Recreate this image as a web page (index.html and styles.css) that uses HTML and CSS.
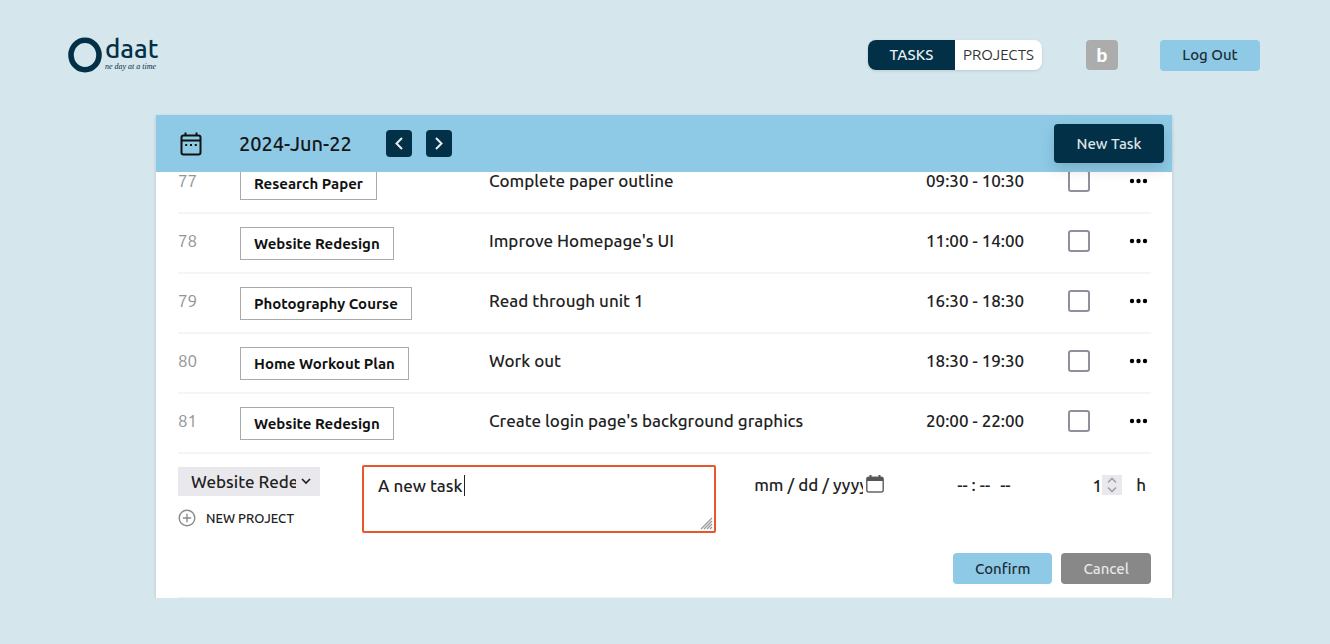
FILE: index.html
```html
<!DOCTYPE html>
<html lang="en">
<head>
<meta charset="utf-8">
<title>Odaat</title>
<link rel="stylesheet" href="styles.css">
</head>
<body>
<header class="topbar">
  <a class="logo" href="#" aria-label="Odaat">
    <svg class="logo-mark" viewBox="0 0 34 36" aria-hidden="true"><ellipse cx="17" cy="18" rx="14" ry="14.7" fill="none" stroke="#023047" stroke-width="5.6"/></svg>
    <span class="logo-words"><span class="logo-name">daat</span><span class="logo-tag">ne day at a time</span></span>
  </a>
  <nav class="topnav">
    <div class="toggle">
      <a class="toggle-item toggle-active" href="#">TASKS</a>
      <a class="toggle-item" href="#">PROJECTS</a>
    </div>
    <a class="avatar" href="#">b</a>
    <button class="btn btn-light logout" type="button">Log Out</button>
  </nav>
</header>

<main class="card">
  <div class="card-head">
    <svg class="calendar" viewBox="0 0 22 24" fill="none" stroke="#111" stroke-width="2" aria-hidden="true">
      <rect x="1.5" y="3.5" width="19" height="19" rx="2"/><path d="M1.500 8.500h19M5.500 .5v3M16.500 .5v3"/><path d="M5.200 13h2M10 13h2M14.800 13h2"/>
    </svg>
    <h1 class="date">2024-Jun-22</h1>
    <div class="steps">
      <button class="step" type="button" aria-label="Previous day"><svg viewBox="0 0 26 27"><path d="M16 8l-5.500 5.500 5.500 5.500"/></svg></button>
      <button class="step" type="button" aria-label="Next day"><svg viewBox="0 0 26 27"><path d="M10 8l5.500 5.500-5.500 5.500"/></svg></button>
    </div>
    <button class="new-task" type="button">New Task</button>
  </div>

  <div class="card-body">
    <table class="tasks">
      <colgroup><col class="c-id"><col class="c-project"><col><col class="c-time"><col class="c-check"><col class="c-more"></colgroup>
      <tbody>
        <tr><td class="id">77</td><td><span class="tag">Research Paper</span></td><td>Complete paper outline</td><td>09:30 - 10:30</td><td><input class="check" type="checkbox" aria-label="Task 77 done"></td><td><button class="more" type="button" aria-label="More"><svg viewBox="0 0 20 6"><circle cx="3" cy="3" r="2.2"/><circle cx="9.5" cy="3" r="2.2"/><circle cx="16" cy="3" r="2.2"/></svg></button></td></tr>
        <tr><td class="id">78</td><td><span class="tag">Website Redesign</span></td><td>Improve Homepage's UI</td><td>11:00 - 14:00</td><td><input class="check" type="checkbox" aria-label="Task 78 done"></td><td><button class="more" type="button" aria-label="More"><svg viewBox="0 0 20 6"><circle cx="3" cy="3" r="2.2"/><circle cx="9.5" cy="3" r="2.2"/><circle cx="16" cy="3" r="2.2"/></svg></button></td></tr>
        <tr><td class="id">79</td><td><span class="tag">Photography Course</span></td><td>Read through unit 1</td><td>16:30 - 18:30</td><td><input class="check" type="checkbox" aria-label="Task 79 done"></td><td><button class="more" type="button" aria-label="More"><svg viewBox="0 0 20 6"><circle cx="3" cy="3" r="2.2"/><circle cx="9.5" cy="3" r="2.2"/><circle cx="16" cy="3" r="2.2"/></svg></button></td></tr>
        <tr><td class="id">80</td><td><span class="tag">Home Workout Plan</span></td><td>Work out</td><td>18:30 - 19:30</td><td><input class="check" type="checkbox" aria-label="Task 80 done"></td><td><button class="more" type="button" aria-label="More"><svg viewBox="0 0 20 6"><circle cx="3" cy="3" r="2.2"/><circle cx="9.5" cy="3" r="2.2"/><circle cx="16" cy="3" r="2.2"/></svg></button></td></tr>
        <tr><td class="id">81</td><td><span class="tag">Website Redesign</span></td><td>Create login page's background graphics</td><td>20:00 - 22:00</td><td><input class="check" type="checkbox" aria-label="Task 81 done"></td><td><button class="more" type="button" aria-label="More"><svg viewBox="0 0 20 6"><circle cx="3" cy="3" r="2.2"/><circle cx="9.5" cy="3" r="2.2"/><circle cx="16" cy="3" r="2.2"/></svg></button></td></tr>
      </tbody>
    </table>

    <form class="task-form">
      <div class="fields">
        <div class="project-field">
          <select class="project" aria-label="Project"><option>Website Redesign</option><option>Research Paper</option><option>Photography Course</option><option>Home Workout Plan</option></select>
          <button class="new-project" type="button">
            <svg viewBox="0 0 18 18" fill="none" stroke="#8a8a8a" stroke-width="1.4" aria-hidden="true"><circle cx="9" cy="9" r="7.8"/><path d="M9 4.8v8.4M4.8 9h8.4"/></svg>
            NEW PROJECT
          </button>
        </div>
        <div class="text-field"><textarea class="text" aria-label="Task">A new task</textarea><span class="caret"></span></div>
        <input class="day" type="date" aria-label="Date">
        <input class="hour" type="time" aria-label="Start time">
        <label class="duration"><input class="amount" type="number" value="1" aria-label="Duration in hours">h</label>
      </div>
      <div class="actions">
        <button class="btn btn-light confirm" type="button">Confirm</button>
        <button class="btn btn-grey" type="button">Cancel</button>
      </div>
    </form>
  </div>
</main>
</body>
</html>
```
FILE: styles.css
```css
* { box-sizing: border-box; }
body {
  margin: 0;
  background: #d5e6ec;
  color: #222;
  font: 500 17px/24px Ubuntu, "Noto Sans", sans-serif;
}
button, input, select, textarea { font: inherit; color: inherit; margin: 0; }
button { border: 0; padding: 0; background: none; cursor: pointer; }
a { color: inherit; text-decoration: none; }

.topbar {
  display: flex;
  align-items: center;
  justify-content: space-between;
  padding: 37px 70px 0 68px;
}
.logo { display: flex; gap: 3px; color: #023047; }
.logo-mark { width: 34px; height: 36px; }
.logo-words { display: flex; flex-direction: column; }
.logo-name { font: 500 26px/24px Ubuntu, "Noto Sans", sans-serif; }
.logo-tag { font: italic 8px/12px "Liberation Serif", serif; }

.topnav { display: flex; align-items: center; }
.toggle {
  display: flex;
  border-radius: 8px;
  background: #fff;
  overflow: hidden;
  box-shadow: 0 1px 3px rgba(0, 0, 0, .12);
  font-size: 15px;
  font-weight: 400;
  line-height: 30px;
}
.toggle-item { width: 87px; text-align: center; color: #333; }
.toggle-active { background: #023047; color: #e8eef0; font-weight: 500; }
.avatar {
  width: 32px;
  margin: 0 42px 0 44px;
  border-radius: 4px;
  background: #acacac;
  color: #fff;
  text-align: center;
  font: 900 19px/30px Lato, sans-serif;
}
.btn { height: 31px; border-radius: 4px; padding: 0 22px; font-size: 15px; font-weight: 500; }
.btn-light { background: #8ecae6; color: #1d2d35; }
.btn-grey { background: #888; color: #e6e6e6; }
.logout { width: 100px; padding: 0; }

.card {
  margin: 42px 158px 0 156px;
  background: #fff;
  box-shadow: 0 1px 3px rgba(0, 0, 0, .16);
}
.card-head {
  position: relative;
  z-index: 1;
  display: flex;
  align-items: center;
  height: 57px;
  padding: 0 8px 0 24px;
  background: #8ecae6;
}
.calendar { width: 22px; height: 24px; }
.date { margin: 0 34px 0 37px; font-size: 20px; font-weight: 500; color: #161616; }
.steps { display: flex; gap: 14px; }
.step { width: 26px; height: 27px; border-radius: 4px; background: #023047; }
.step svg { display: block; fill: none; stroke: #e8eef0; stroke-width: 2; }
.new-task {
  width: 110px;
  height: 39px;
  margin-left: auto;
  border-radius: 4px;
  background: #023047;
  color: #dfe5e8;
  font-size: 15px;
  box-shadow: 0 6px 14px rgba(0, 0, 0, .14);
}

.card-body { overflow: hidden; padding: 0 21px 0 22px; }
.tasks { width: 100%; margin-top: -18px; table-layout: fixed; border-collapse: separate; border-spacing: 0; }
.tasks td {
  height: 60px;
  padding: 0 0 4px;
  border-bottom: 2px solid #f5f5f5;
  vertical-align: middle;
  white-space: nowrap;
}
.c-id { width: 62px; }
.c-project { width: 249px; }
.c-time { width: 142px; }
.c-check { width: 61px; }
.c-more { width: 22px; }
.tasks .id { color: #949494; font-weight: 400; }
.tag {
  display: inline-block;
  margin-top: 4px;
  padding: 5px 13px 4px;
  border: 1px solid #aaa;
  font-size: 15px;
  line-height: 22px;
  font-weight: 600;
  color: #111;
  vertical-align: middle;
}
.check {
  display: block;
  appearance: none;
  width: 22px;
  height: 22px;
  border: 2px solid #8f8f9d;
  border-radius: 3px;
}
.more { display: block; width: 20px; height: 6px; }
.more svg { display: block; width: 20px; height: 6px; }

.task-form { border-bottom: 1px solid #f2f2f2; padding: 11px 0 13px; }
.fields { display: flex; align-items: flex-start; }
.project-field { width: 142px; padding-top: 2px; }
.project {
  display: block;
  appearance: none;
  width: 100%;
  height: 29px;
  padding: 0 24px 0 13px;
  border: 0;
  border-radius: 0;
  background: #e9e9ed url("data:image/svg+xml,%3Csvg xmlns='http://www.w3.org/2000/svg' width='10' height='7' fill='none' stroke='%23222' stroke-width='1.7'%3E%3Cpath d='M1 1l4 4 4-4'/%3E%3C/svg%3E") no-repeat right 9px center;
}
.new-project { display: flex; align-items: center; gap: 10px; margin-top: 10px; font-size: 13px; white-space: nowrap; }
.new-project svg { width: 18px; height: 18px; }
.text-field { position: relative; flex: 1; margin: 0 37px 0 42px; }
.text {
  display: block;
  width: 100%;
  height: 68px;
  padding: 7px 14px;
  border: 2px solid #e9562b;
  border-radius: 2px;
  outline: 0;
  background: #fff;
}
.text::-webkit-resizer {
  background: url("data:image/svg+xml,%3Csvg xmlns='http://www.w3.org/2000/svg' width='15' height='15' stroke='%23999' stroke-width='1.3'%3E%3Cpath d='M2 13L13 2M5 13l8-8M8 13l5-5M11 13l2-2'/%3E%3C/svg%3E") no-repeat right bottom;
}
.caret { position: absolute; left: 102px; top: 10px; width: 1px; height: 21px; background: #222; }
.day, .hour, .amount { border: 0; padding: 0; background: none; outline: 0; height: 40px; }
.day { width: 131px; }
.day::-webkit-datetime-edit { overflow: hidden; }
.day::-webkit-datetime-edit-text, .hour::-webkit-datetime-edit-text { padding: 0 3px; }
.day::-webkit-calendar-picker-indicator {
  width: 18px;
  height: 18px;
  margin: 0 0 3px 3px;
  padding: 0;
  background: url("data:image/svg+xml,%3Csvg xmlns='http://www.w3.org/2000/svg' viewBox='0 0 18 18'%3E%3Crect x='.8' y='2.3' width='16.4' height='14.7' rx='2' fill='none' stroke='%23666' stroke-width='1.5'/%3E%3Cpath d='M1 2.5h16V6H1zM3.5 0h2v3h-2zM12.500 0h2v3h-2z' fill='%23555'/%3E%3C/svg%3E") no-repeat;
}
.hour { width: 96px; margin-left: 72px; }
.hour::-webkit-calendar-picker-indicator { display: none; }
.duration { display: flex; align-items: center; gap: 14px; margin-left: 22px; padding-right: 5px; }
.amount { width: 48px; text-align: right; }
.amount::-webkit-inner-spin-button {
  appearance: none;
  opacity: 1;
  width: 20px;
  height: 20px;
  background: #e9e9ed url("data:image/svg+xml,%3Csvg xmlns='http://www.w3.org/2000/svg' width='20' height='20' fill='none' stroke='%23a0a0ac' stroke-width='1.6'%3E%3Cpath d='M6 7.500l4-4 4 4M6 12.500l4 4 4-4'/%3E%3C/svg%3E") no-repeat;
}
.actions { display: flex; justify-content: flex-end; gap: 9px; margin-top: 20px; }
```
